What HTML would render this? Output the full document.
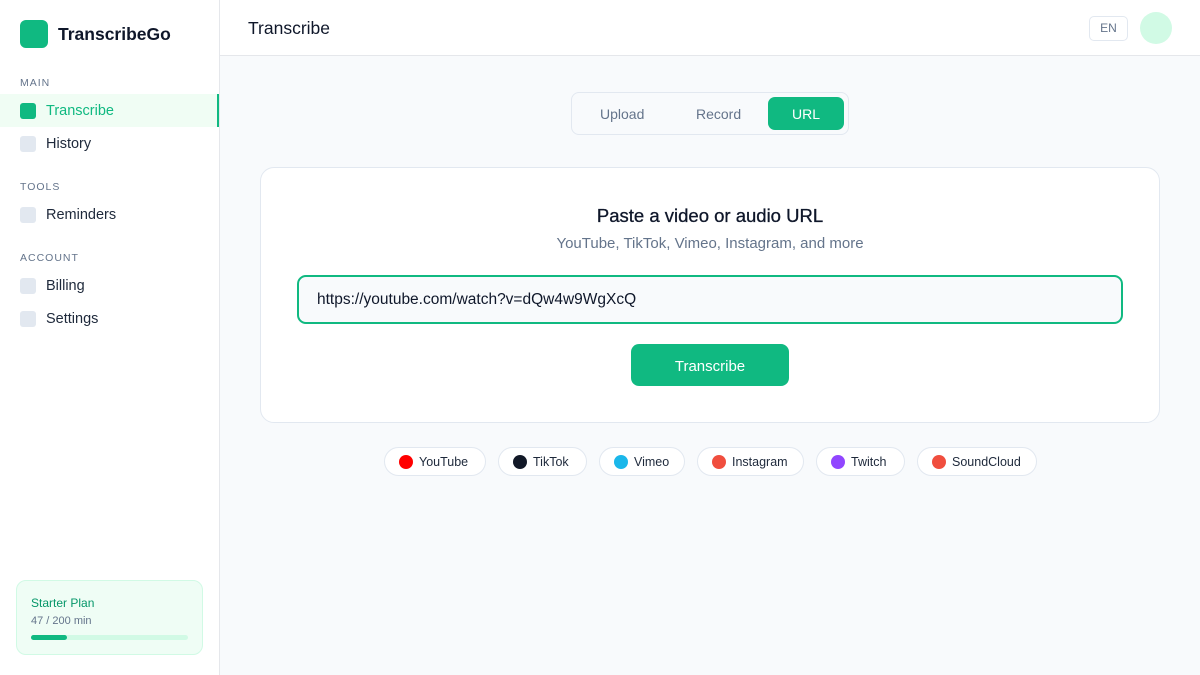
<!DOCTYPE html>
<html><head><style>
*{box-sizing:border-box;margin:0;padding:0}
body{width:1200px;height:675px;font-family:"Liberation Sans",sans-serif;background:#f8fafc;position:relative;overflow:hidden;color:#0f172a}
.sb{position:absolute;left:0;top:0;width:220px;height:675px;background:#fff;border-right:1px solid #e5e7eb}
.logo{position:absolute;left:20px;top:20px;width:28px;height:28px;border-radius:6px;background:#10b981}
.brand{position:absolute;left:58px;top:24px;font-size:17.5px;font-weight:bold;color:#0f172a}
.lbl{position:absolute;left:20px;font-size:10.5px;letter-spacing:1px;color:#64748b}
.it{position:absolute;left:0;width:219px;height:33px;font-size:14.5px;color:#1e293b}
.it i{position:absolute;left:20px;top:9px;width:16px;height:16px;border-radius:3px;background:#e2e8f0}
.it span{position:absolute;left:46px;top:9px}
.it.a{background:#f0fdf4;border-right:2px solid #10b981;color:#10b981}
.it.a i{background:#10b981}
.plan{position:absolute;left:16px;top:580px;width:187px;height:75px;border-radius:10px;background:#effdf5;border:1px solid #d1fae5}
.hd{position:absolute;left:220px;top:0;right:0;height:56px;background:#fff;border-bottom:1px solid #e5e7eb}
.tabs{position:absolute;left:571px;top:92px;width:278px;height:43px;border:1px solid #e2e8f0;border-radius:8px;background:#f8fafc}
.tabs span{position:absolute;top:13px;font-size:14px;color:#64748b}
.card{position:absolute;left:260px;top:167px;width:900px;height:256px;background:#fff;border:1px solid #e2e8f0;border-radius:14px}
.chip{position:absolute;top:447px;height:29px;border:1px solid #e2e8f0;border-radius:15px;background:#fff;font-size:12.5px;color:#1e293b}
.chip i{position:absolute;left:14px;top:7px;width:14px;height:14px;border-radius:50%}
.chip span{position:absolute;left:34px;top:7px}
</style></head><body>
<div class="sb">
<div class="logo"></div><div class="brand">TranscribeGo</div>
<div class="lbl" style="top:77px">MAIN</div>
<div class="it a" style="top:94px"><i></i><span>Transcribe</span></div>
<div class="it" style="top:127px"><i></i><span>History</span></div>
<div class="lbl" style="top:181px">TOOLS</div>
<div class="it" style="top:198px"><i></i><span>Reminders</span></div>
<div class="lbl" style="top:252px">ACCOUNT</div>
<div class="it" style="top:269px"><i></i><span>Billing</span></div>
<div class="it" style="top:302px"><i></i><span>Settings</span></div>
<div class="plan">
<div style="position:absolute;left:14px;top:15px;font-size:12px;color:#059669">Starter Plan</div>
<div style="position:absolute;left:14px;top:34px;font-size:11px;color:#64748b">47 / 200 min</div>
<div style="position:absolute;left:14px;top:54px;width:157px;height:5px;border-radius:3px;background:#d1fae5"><div style="width:36px;height:5px;border-radius:3px;background:#10b981"></div></div>
</div>
</div>
<div class="hd">
<div style="position:absolute;left:28px;top:18px;font-size:17.5px;color:#0f172a">Transcribe</div>
<div style="position:absolute;left:869px;top:16px;width:39px;height:25px;border:1px solid #e2e8f0;border-radius:5px;font-size:12px;color:#64748b;text-align:center;line-height:23px">EN</div>
<div style="position:absolute;left:920px;top:12px;width:32px;height:32px;border-radius:50%;background:#d1fae5"></div>
</div>
<div class="tabs">
<span style="left:28px">Upload</span><span style="left:124px">Record</span>
<div style="position:absolute;left:196px;top:4px;width:76px;height:33px;border-radius:7px;background:#10b981;color:#fff;font-size:14px;text-align:center;line-height:35px">URL</div>
</div>
<div class="card">
<div style="position:absolute;left:0;right:0;top:37px;text-align:center;font-size:18.5px;color:#0f172a;-webkit-text-stroke:0.3px #0f172a">Paste a video or audio URL</div>
<div style="position:absolute;left:0;right:0;top:67px;text-align:center;font-size:15px;color:#64748b">YouTube, TikTok, Vimeo, Instagram, and more</div>
<div style="position:absolute;left:36px;top:107px;width:826px;height:49px;border:2px solid #10b981;border-radius:9px;background:#f8fafc;font-size:15.5px;color:#0f172a;padding:14px 0 0 18px">https://youtube.com/watch?v=dQw4w9WgXcQ</div>
<div style="position:absolute;left:370px;top:176px;width:158px;height:42px;border-radius:8px;background:#10b981;color:#fff;font-size:15px;text-align:center;line-height:45px">Transcribe</div>
</div>
<div class="chip" style="left:384px;width:102px"><i style="background:#ff0000"></i><span>YouTube</span></div>
<div class="chip" style="left:498px;width:89px"><i style="background:#111827"></i><span>TikTok</span></div>
<div class="chip" style="left:599px;width:86px"><i style="background:#1ab7ea"></i><span>Vimeo</span></div>
<div class="chip" style="left:697px;width:107px"><i style="background:#f04e3e"></i><span>Instagram</span></div>
<div class="chip" style="left:816px;width:89px"><i style="background:#9146ff"></i><span>Twitch</span></div>
<div class="chip" style="left:917px;width:120px"><i style="background:#f04e3e"></i><span>SoundCloud</span></div>
</body></html>
